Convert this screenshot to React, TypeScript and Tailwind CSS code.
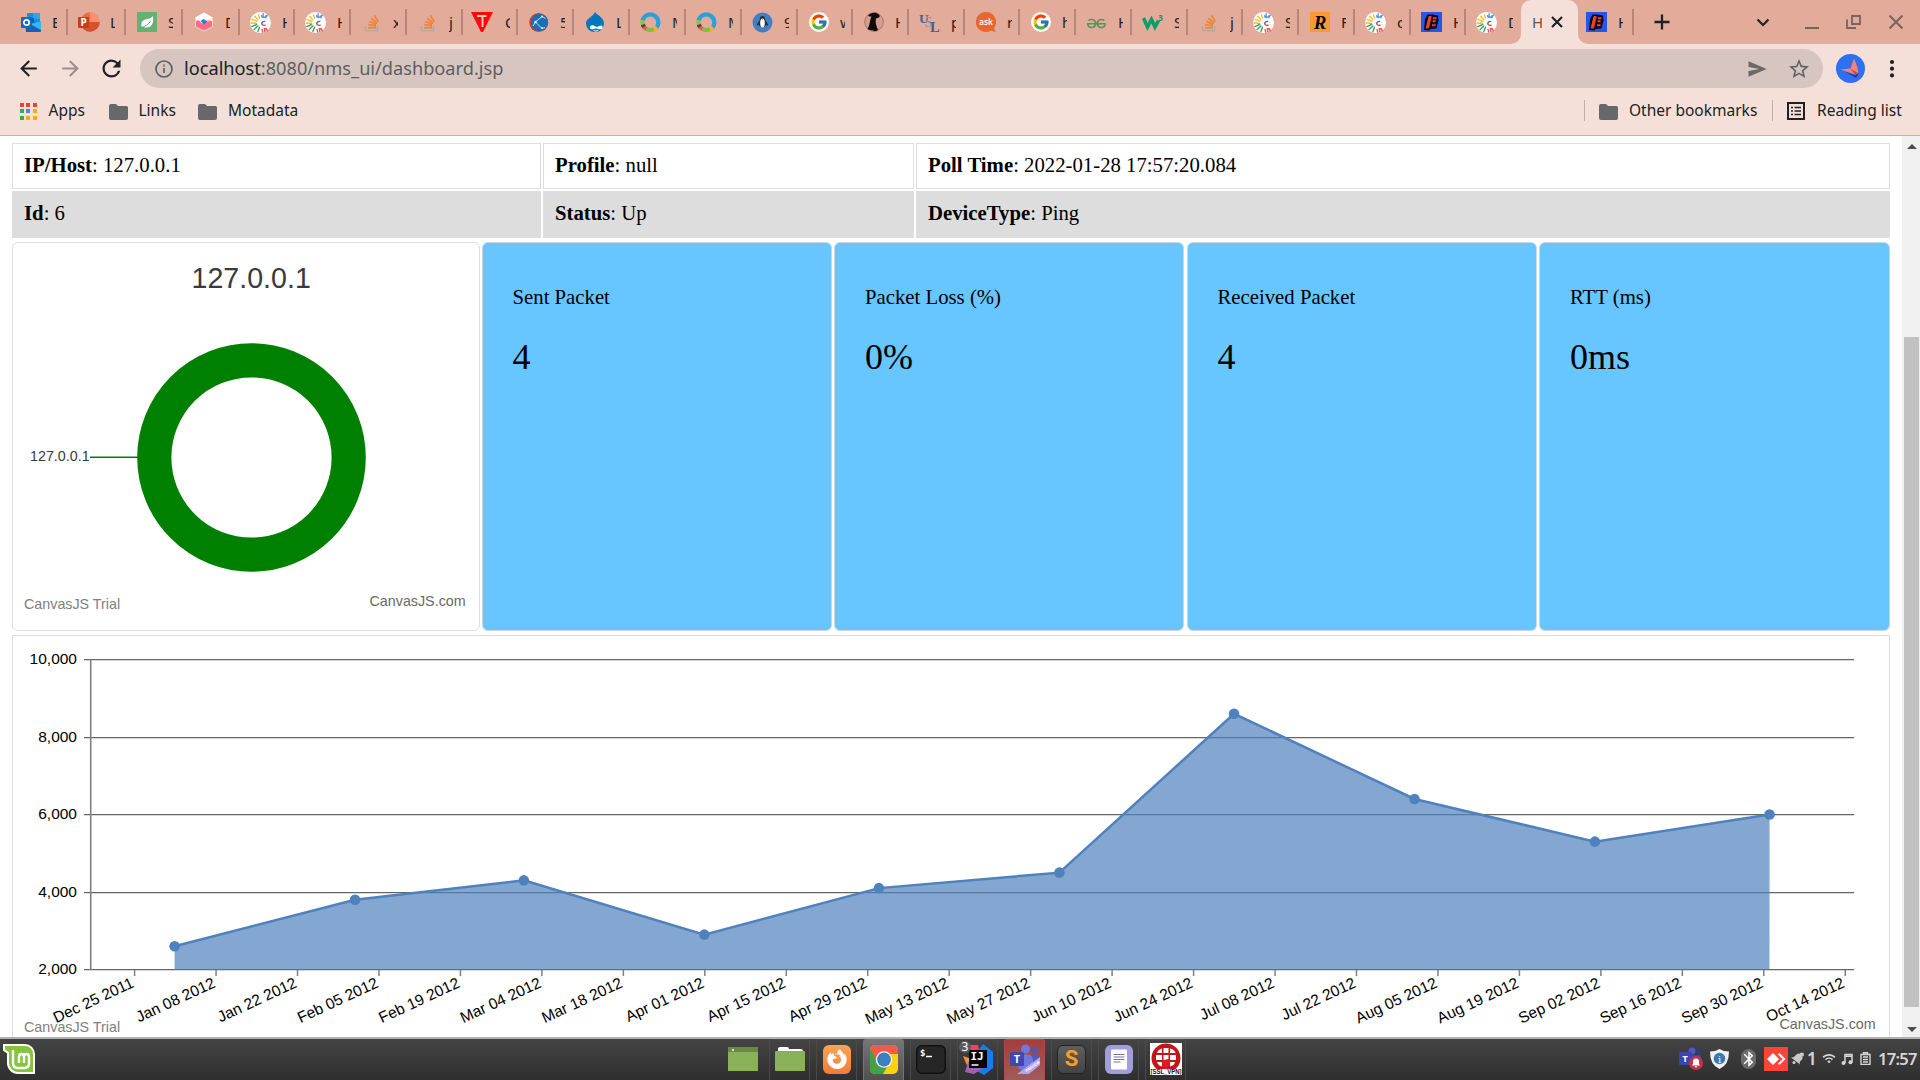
import React from "react";
import { FcGoogle } from "react-icons/fc";
import { SiGeeksforgeeks, SiFirefoxbrowser } from "react-icons/si";
import { MdRefresh, MdArrowBack, MdArrowForward, MdStarOutline, MdWifi, MdBluetooth } from "react-icons/md";

const ICON = "h-5 w-5 shrink-0";

function Outlook() {
  return (
    <svg className={ICON} viewBox="0 0 20 20">
      <rect x="6" y="1" width="13" height="13" rx="1" fill="#1490df" />
      <rect x="12" y="1" width="7" height="6" fill="#28a8ea" />
      <rect x="7" y="6" width="6" height="6" fill="#0364b8" />
      <path d="M4 10h16v9a1 1 0 0 1-1 1H5z" fill="#1a5fb8" />
      <path d="M20 9v9L9 12z" fill="#35b8f1" />
      <rect x="0" y="5" width="11" height="11" rx="1" fill="#0f6cbd" />
      <circle cx="5.5" cy="10.5" r="2.7" fill="none" stroke="#fff" strokeWidth="1.7" />
    </svg>
  );
}
function PowerPoint() {
  return (
    <svg className="h-5 w-[22px] shrink-0" viewBox="0 0 22 20">
      <circle cx="12" cy="10" r="9.7" fill="#ed6c47" />
      <path d="M12 .3a9.7 9.7 0 0 1 9.7 9.7H12z" fill="#ff8f6b" />
      <path d="M2.3 10h19.4a9.7 9.7 0 0 1-19.4 0z" fill="#d35230" />
      <rect x="0" y="5" width="11" height="11" rx="1" fill="#c43e1c" />
      <text x="2.4" y="14" fontSize="10" fontWeight="700" fill="#fff" fontFamily="Open Sans, sans-serif">P</text>
    </svg>
  );
}
function Leaf() {
  return (
    <svg className={ICON} viewBox="0 0 20 20">
      <rect width="20" height="20" fill="#65b073" />
      <path d="M4.500 14.500C3.500 9 7 7.500 10.500 7c2.500-.4 4-1.200 5.300-3 1 5.500 0 11.500-6.300 11.500-1.300 0-2.200-.2-3-.6z" fill="#fff" />
      <path d="M5 15.300c3.500-.8 6.500-2.800 8.500-6" fill="none" stroke="#65b073" strokeWidth="1" />
    </svg>
  );
}
function Hexagon() {
  return (
    <svg className={ICON} viewBox="0 0 20 20">
      <path d="M10 .5l8.500 4.800v9.400L10 19.500l-8.500-4.800V5.300z" fill="#fff" />
      <path d="M2 9c2-1.500 3-1 4.500 1s2 1.500 3.500 0 4-2.500 8-1v5.500L10 18.700 2 14.500z" fill="#ff6b84" />
      <path d="M6.500 9l3-2 4 2.500-3.500 3z" fill="#1c86d8" />
      <path d="M12.500 8.500l2.500-1 1.500 1.500-3 1z" fill="#ffc352" />
    </svg>
  );
}
function Rays() {
  return (
    <svg className="h-[21px] w-[21px] shrink-0" viewBox="0 0 20 20">
      <circle cx="10" cy="10" r="10" fill="#fff" />
      <g fill="none" strokeWidth="1.300" strokeLinecap="round">
        <path d="M2 7l4.500 2M4.500 4l3 3.500M1 10.500l5 .2M8 2.800l1.200 3" stroke="#f4b92a" />
        <path d="M1.800 14l4.700-2.300M4 16.800l3.500-3.500M7.500 18.500l1.600-4" stroke="#3b9e58" />
        <path d="M12 19l-.5-2.500M16.500 18l-1-2h-2M14 18.500v-1.500" stroke="#e0524c" />
        <path d="M11 3.500c0 2 3 2.500 4.500 0M12.500 1.500v3M16.500 3l-1.500 2.500" stroke="#5b93e6" />
        <path d="M14 9a2.300 2.300 0 0 0-2.800 2" stroke="#2f6fe0" />
        <path d="M11.200 11a2.300 2.300 0 0 0 3.300 1.500" stroke="#e7463c" />
      </g>
    </svg>
  );
}
function Stack() {
  return (
    <svg className={ICON} viewBox="0 0 20 20">
      <path d="M3.500 14v4.700h12V14" fill="none" stroke="#b5a9a5" strokeWidth="1.500" />
      <path d="M6 15.800h8M6.200 12.600l7.800 1.200M7.300 9.300l7 3M9.300 6.200l5.800 4.900M12.300 3.300l4 6.400" stroke="#ef8536" strokeWidth="1.800" />
    </svg>
  );
}
function RedTriangle() {
  return (
    <svg className="-ml-1 h-5 w-[22px] shrink-0" viewBox="0 0 22 20">
      <path d="M0 0h22L12 20h-2z" fill="#fb0a0a" />
      <path d="M6 4h9.500M11.500 4v11" stroke="#f7cfc6" strokeWidth="1.900" />
    </svg>
  );
}
function Network() {
  return (
    <svg className={ICON} viewBox="0 0 20 20">
      <circle cx="9.700" cy="10.500" r="9.400" fill="#d23a33" />
      <circle cx="10.500" cy="10.300" r="8.600" fill="#1770b3" />
      <path d="M13 4.500L6.500 10 13 16.500M13 4.500l3.500 2M6.500 10L4 14M13 16.500l3-1" stroke="#dbe9f5" strokeWidth=".9" fill="none" />
      <circle cx="6.500" cy="10" r="1.300" fill="#dbe9f5" />
      <circle cx="13" cy="4.500" r="1" fill="#dbe9f5" />
      <circle cx="13" cy="16" r="1" fill="#dbe9f5" />
    </svg>
  );
}
function Drop() {
  return (
    <svg className={ICON} viewBox="0 0 20 20">
      <path d="M10 0c1 2.500 9 5 9 11.500A8.700 8.700 0 0 1 10 20a8.700 8.700 0 0 1-9-8.500C1 6 8.500 4.500 10 0z" fill="#0277bd" />
      <path d="M5 15.500c0-3.500 4-2.500 5.500-1s6-3 7 0-3 3.500-5 2.200-7.500 2.500-7.500-1.200z" fill="#fff" />
      <path d="M8.500 18.300c1.500 1 3.500.8 4.500 0" stroke="#fff" fill="none" />
    </svg>
  );
}
function Ring() {
  return (
    <svg className="h-5 w-[21px] shrink-0" viewBox="0 0 21 20">
      <g fill="none" strokeWidth="4.200">
        <path d="M2.600 8.500A8 8 0 1 1 16.500 15.600" stroke="#2e9fdb" />
        <path d="M2.600 8.300A8 8 0 0 0 2.800 12.500" stroke="#8bc34a" />
        <path d="M2.800 12.500A8 8 0 0 0 4.200 15" stroke="#444" />
        <path d="M4.200 15A8 8 0 0 0 6.500 17" stroke="#ef5350" />
        <path d="M6.500 17A8 8 0 0 0 14 17.200" stroke="#7cc142" />
        <path d="M14 17.200A8 8 0 0 0 16.700 15.300" stroke="#fbb01c" />
      </g>
    </svg>
  );
}
function Penguin() {
  return (
    <svg className="h-[21px] w-[21px] shrink-0" viewBox="0 0 21 20">
      <circle cx="10.500" cy="10" r="10" fill="#427fc6" />
      <path d="M10.500 3.500c2 0 2.700 1.500 2.700 3.500 0 1 4 5 2.600 6-.6.400-1.200-.8-1.800-.4-.5 3-6.500 3-7 0-.6-.4-1.200.8-1.800.4C3.800 12 7.800 8 7.800 7c0-2 .7-3.500 2.700-3.500z" fill="#263238" />
      <ellipse cx="10.500" cy="10.500" rx="2.300" ry="4.500" fill="#fff" />
      <path d="M9.500 6.500h2l-1 1.500z" fill="#f0b429" />
    </svg>
  );
}
function Google() {
  return (
    <span className="flex h-5 w-5 shrink-0 items-center justify-center rounded-full bg-white">
      <FcGoogle className="h-[18px] w-[18px]" />
    </span>
  );
}
function Portrait() {
  return (
    <svg className={ICON} viewBox="0 0 20 20">
      <circle cx="10" cy="10" r="9.300" fill="#d59f8e" stroke="#a87365" />
      <path d="M4 3.500C7 0 12 0 14 2c2 1 2 2.500 1 3.500l-3 1c-1 4 0 7 2 11.500-3 2-5 1-5.500 0-1.500.5-4.500 0-5-1.500 2.500-3 2-8 4-12C6 4.500 5 4.500 4 3.500z" fill="#110b0b" />
    </svg>
  );
}
function Usl() {
  return (
    <svg className="h-5 w-[21px] shrink-0" viewBox="0 0 21 20" fontFamily="Liberation Serif, serif" fontWeight="700">
      <text x="0" y="10.500" fontSize="13.500" fill="#44608f">U</text>
      <text x="5.500" y="14.500" fontSize="14" fontWeight="400" fill="#7c8fb5">S</text>
      <text x="11" y="19.500" fontSize="14.500" fill="#44608f">L</text>
    </svg>
  );
}
function Ask() {
  return (
    <svg className={ICON} viewBox="0 0 20 20">
      <path d="M10 0a10 10 0 0 1 8 16l1.500 4-4.500-1.500A10 10 0 1 1 10 0z" fill="#e9662c" />
      <text x="10" y="13.300" fontSize="8.600" fontWeight="600" textAnchor="middle" fill="#fff" fontFamily="Open Sans, sans-serif">ask</text>
    </svg>
  );
}
function Gfg() {
  return <SiGeeksforgeeks className="mt-[2px] h-[19px] w-[19px] shrink-0 text-[#4f9a58]" />;
}
function W3() {
  return (
    <svg className="h-5 w-[21px] shrink-0" viewBox="0 0 21 20">
      <path d="M1.500 6l4 9 4-7.500 3.500 7.500 3.500-6.500" fill="none" stroke="#0a9e6c" strokeWidth="3.600" />
      <text x="16" y="9" fontSize="8.500" fontWeight="700" fill="#0a9e6c" fontFamily="Open Sans, sans-serif">3</text>
    </svg>
  );
}
function Rbox() {
  return (
    <svg className={ICON} viewBox="0 0 20 20">
      <rect width="20" height="20" fill="#fb9a34" />
      <text x="3.800" y="16.500" fontSize="19" fontWeight="700" fontStyle="italic" fill="#000" fontFamily="Liberation Serif, serif">R</text>
    </svg>
  );
}
function Blue() {
  return (
    <svg className="h-5 w-[21px] shrink-0" viewBox="0 0 21 20">
      <rect width="21" height="20" fill="#2458ea" />
      <path d="M6.500 2.500h5l5.500 1 .5 5-2 8-6 .5-1 1.500-5.500-.5 1-11z" fill="#0a0c1e" />
      <path d="M8 4.500h2.200L7.500 16H5.200z" fill="#f4402b" stroke="#f4402b" />
      <path d="M12 6.200h3.500M11.600 9.300h3M11 13.300h3.500" stroke="#f4402b" strokeWidth="2" />
    </svg>
  );
}

type Tab = [number, React.FC, string];
const TABS: Tab[] = [
  [58, Outlook, "E"], [58, PowerPoint, "L"], [57, Leaf, "S"], [57, Hexagon, "D"], [55, Rays, "H"], [56, Rays, "H"],
  [56, Stack, "x"], [56, Stack, "j"], [55, RedTriangle, "C"], [56, Network, "5"], [56, Drop, "L"], [56, Ring, "M"],
  [56, Ring, "M"], [56, Penguin, "9"], [55, Google, "w"], [56, Portrait, "H"], [56, Usl, "p"], [55, Ask, "r"],
  [56, Google, "h"], [56, Gfg, "H"], [56, W3, "S"], [55, Stack, "j"], [56, Rays, "S"], [56, Rbox, "F"],
  [56, Rays, "c"], [55, Blue, "H"], [55, Rays, "D"],
];

function TabItem({ tab, last }: { tab: Tab; last?: boolean }) {
  const [width, Icon, letter] = tab;
  return (
    <div className="relative flex h-full shrink-0 items-center pl-[10px]" style={{ width }}>
      <div className="flex w-[21px] justify-center"><Icon /></div>
      <span className="ml-[11px] w-[5px] overflow-hidden text-[15px] leading-5">{letter}</span>
      {!last && <span className="absolute right-0 top-[9px] h-[26px] w-[2px] bg-[#b5877b]" />}
    </div>
  );
}

function TabStrip() {
  return (
    <div className="flex h-11 shrink-0 bg-[#e3ab99] pl-[10px] text-[#202124]">
      {TABS.map((t, i) => <TabItem key={i} tab={t} last={i === TABS.length - 1} />)}
      <div className="relative flex h-full w-[57px] shrink-0 items-center rounded-t-[10px] bg-[#f5e0d9] pl-[11px]">
        <svg className="absolute -left-[10px] bottom-0 h-[10px] w-[10px]" viewBox="0 0 10 10"><path d="M10 0v10H0A10 10 0 0 0 10 0z" fill="#f5e0d9" /></svg>
        <svg className="absolute -right-[10px] bottom-0 h-[10px] w-[10px]" viewBox="0 0 10 10"><path d="M0 0v10h10A10 10 0 0 1 0 0z" fill="#f5e0d9" /></svg>
        <span className="w-[10px] overflow-hidden text-[15px] leading-5 text-[#5f5450]">H</span>
        <svg className="ml-[9px] h-3 w-3" viewBox="0 0 12 12"><path d="M1 1l10 10M11 1L1 11" stroke="#202124" strokeWidth="2.200" /></svg>
      </div>
      <div className="-ml-[2px] h-full shrink-0"><TabItem tab={[58, Blue, "H"]} /></div>
      <div className="flex flex-1 items-center">
        <svg className="ml-5 h-4 w-4" viewBox="0 0 16 16"><path d="M8 .5v15M.5 8h15" stroke="#202124" strokeWidth="2.300" /></svg>
        <svg className="ml-[87px] h-3 w-3" viewBox="0 0 12 12"><path d="M.5 3.500L6 9l5.500-5.500" fill="none" stroke="#202124" strokeWidth="2.200" /></svg>
        <span className="ml-9 mt-[11px] h-[2px] w-[14px] bg-[#76655f]" />
        <svg className="ml-[27px] h-[14px] w-[15px]" viewBox="0 0 15 14"><path d="M6 1h8v8H6zM1 4.500V13h9" fill="none" stroke="#76655f" strokeWidth="1.800" /></svg>
        <svg className="ml-7 h-[14px] w-[14px]" viewBox="0 0 14 14"><path d="M.5.5l13 13M13.500.5l-13 13" stroke="#76655f" strokeWidth="2" /></svg>
      </div>
    </div>
  );
}

function Toolbar() {
  return (
    <div className="flex h-[49px] shrink-0 items-center bg-[#f5e0d9] text-[#202124]">
      <MdArrowBack className="ml-4 h-[25px] w-[25px]" />
      <MdArrowForward className="ml-[17px] h-[25px] w-[25px] text-[#9c8f8b]" />
      <MdRefresh className="ml-[15px] h-[27px] w-[27px]" />
      <div className="ml-[15px] flex h-[39px] w-[1683px] items-center rounded-full bg-[#d7c6bf] pl-[15px]">
        <svg className="h-[18px] w-[18px]" viewBox="0 0 18 18" fill="none" stroke="#5f6368" strokeWidth="1.700"><circle cx="9" cy="9" r="8" /><path d="M9 8v5M9 4.600v1.900" /></svg>
        <span className="mb-[2px] ml-[11px] text-[18.200px] leading-6 text-[#5f5d60]"><span className="text-[#202124]">localhost</span>:8080/nms_ui/dashboard.jsp</span>
        <svg className="ml-auto h-4 w-[19px]" viewBox="0 0 19 16"><path d="M.5.300L18.700 8 .5 15.700V10l11-2-11-2z" fill="#6b6867" /></svg>
        <MdStarOutline className="ml-5 mr-3 h-6 w-6 text-[#5f6368]" />
      </div>
      <svg className="ml-[13px] h-[29px] w-[29px]" viewBox="0 0 29 29">
        <circle cx="14.500" cy="14.500" r="14.500" fill="#2f70f0" />
        <path d="M8 17l10 4 5-2-3 5-5-3z" fill="#1d3f9e" />
        <path d="M4.500 15.500l10-1L18 4.500l3.500 9 .8 5.500-3 1.500-6-2z" fill="#f58278" />
        <path d="M14.500 14.500l7.500 4.500-3 1.500z" fill="#c9474b" />
      </svg>
      <svg className="ml-[23px] h-5 w-[8px]" viewBox="0 0 8 20" fill="#202124"><circle cx="4" cy="3" r="2.100" /><circle cx="4" cy="9.700" r="2.100" /><circle cx="4" cy="16.400" r="2.100" /></svg>
    </div>
  );
}

function Folder({ className }: { className: string }) {
  return (
    <svg className={className} viewBox="0 0 19 16"><path d="M2 0h5l2 2h8.500A1.500 1.500 0 0 1 19 3.500V14a2 2 0 0 1-2 2H2a2 2 0 0 1-2-2V2a2 2 0 0 1 2-2z" fill="#666869" /></svg>
  );
}

const APPS = ["#ea4335", "#ea4335", "#ea4335", "#34a853", "#4285f4", "#fbab0c", "#34a853", "#fbab0c", "#fbab0c"];

function Bookmarks() {
  return (
    <div className="flex h-[43px] shrink-0 items-center border-b border-[#c3b1ab] bg-[#f5e0d9] pb-[7px] text-[15.500px] text-[#202124]">
      <div className="mb-[-1px] ml-[19.500px] grid grid-cols-3 gap-[2.500px]">
        {APPS.map((c, i) => <span key={i} className="h-1 w-1" style={{ backgroundColor: c }} />)}
      </div>
      <span className="ml-3 w-[60px]">Apps</span>
      <Folder className="mt-[2px] h-4 w-[19px]" />
      <span className="ml-[11px] w-[59px]">Links</span>
      <Folder className="mt-[2px] h-4 w-[19px]" />
      <span className="ml-[11.500px]">Motadata</span>
      <span className="ml-auto h-[21px] w-px bg-[#c0aea8]" />
      <Folder className="ml-[14px] mt-[2px] h-4 w-[19px]" />
      <span className="ml-[11px] w-[129px] whitespace-nowrap">Other bookmarks</span>
      <span className="ml-[14px] h-[21px] w-px bg-[#c0aea8]" />
      <svg className="ml-[14px] h-[18px] w-[18px]" viewBox="0 0 18 18"><path d="M1 1h16v16H1z" fill="none" stroke="#202124" strokeWidth="2" /><path d="M4 5.500h2M4 9h2M4 12.500h2M7.500 5.500H14M7.500 9H14M7.500 12.500H14" stroke="#202124" strokeWidth="1.700" /></svg>
      <span className="ml-3 mr-[17px] w-[86px] whitespace-nowrap">Reading list</span>
    </div>
  );
}

const INFO = [
  [["IP/Host", "127.0.0.1"], ["Profile", "null"], ["Poll Time", "2022-01-28 17:57:20.084"]],
  [["Id", "6"], ["Status", "Up"], ["DeviceType", "Ping"]],
];
const STATS = [["Sent Packet", "4"], ["Packet Loss (%)", "0%"], ["Received Packet", "4"], ["RTT (ms)", "0ms"]];

function Donut() {
  return (
    <svg className="block h-[387px] w-[466px]" viewBox="13 243 466 387" fontFamily="Liberation Sans, sans-serif">
      <text x="251.200" y="288" fontSize="28.600" textAnchor="middle" fill="#3a3a3a">127.0.0.1</text>
      <circle cx="251.500" cy="457.500" r="97.200" fill="none" stroke="#008000" strokeWidth="34.200" />
      <path d="M90 457.300h48" stroke="#008000" strokeWidth="1.500" />
      <text x="30" y="461" fontSize="14.300" fill="#3a3a3a">127.0.0.1</text>
      <text x="24" y="609" fontSize="14.300" fill="#808080">CanvasJS Trial</text>
      <text x="369.500" y="606" fontSize="14.300" fill="#696969">CanvasJS.com</text>
    </svg>
  );
}

const DATES = ["Dec 25 2011", "Jan 08 2012", "Jan 22 2012", "Feb 05 2012", "Feb 19 2012", "Mar 04 2012", "Mar 18 2012", "Apr 01 2012", "Apr 15 2012", "Apr 29 2012", "May 13 2012", "May 27 2012", "Jun 10 2012", "Jun 24 2012", "Jul 08 2012", "Jul 22 2012", "Aug 05 2012", "Aug 19 2012", "Sep 02 2012", "Sep 16 2012", "Sep 30 2012", "Oct 14 2012"];
const SERIES = [[0, 2600], [31, 3800], [60, 4300], [91, 2900], [121, 4100], [152, 4500], [182, 8600], [213, 6400], [244, 5300], [274, 6000]];
const yOf = (v: number) => 969.5 - ((v - 2000) / 1000) * 38.75;
const POINTS = SERIES.map(([d, v]) => [174.6 + d * 5.821, yOf(v)]);
const LINE = POINTS.map((p) => p.join(",")).join(" ");

function AreaChart() {
  return (
    <svg className="block h-[402px] w-[1876px]" viewBox="13 636 1876 402" fontFamily="Liberation Sans, sans-serif" fontSize="15.500">
      {[10000, 8000, 6000, 4000, 2000].map((v) => (
        <g key={v}>
          <path d={`M84 ${Math.floor(yOf(v)) + 0.6}H1854`} stroke="#666" strokeWidth="1.250" />
          <text x="77" y={yOf(v) + 4.5} textAnchor="end" fill="#000">{v.toLocaleString("en-US")}</text>
        </g>
      ))}
      <path d="M90.700 659V970" stroke="#808080" strokeWidth="1.600" />
      <polygon points={`174.600,969.500 ${LINE} 1769.500,969.500`} fill="#4f81bd" fillOpacity="0.700" />
      <polyline points={LINE} fill="none" stroke="#4f81bd" strokeWidth="2.500" />
      {POINTS.map(([x, y]) => <circle key={x} cx={x} cy={y} r="5.300" fill="#4f81bd" />)}
      {DATES.map((d, i) => {
        const x = 134.6 + i * 81.46;
        return (
          <g key={d}>
            <path d={`M${x} 970v6`} stroke="#808080" strokeWidth="1.500" />
            <text transform={`translate(${x + 0.3} 986.500) rotate(-25)`} textAnchor="end" fill="#000">{d}</text>
          </g>
        );
      })}
      <text x="24" y="1032" fontSize="14.300" fill="#808080">CanvasJS Trial</text>
      <text x="1779.500" y="1029" fontSize="14.300" fill="#696969">CanvasJS.com</text>
    </svg>
  );
}

function Page() {
  return (
    <div className="flex min-h-0 flex-1 overflow-hidden bg-white font-['Liberation_Serif',serif] text-[20.750px] text-black">
      <div className="flex w-[1902px] flex-col px-3 pt-[7px]">
        {INFO.map((row, r) => (
          <div key={r} className={r === 0 ? "mb-[2px] grid h-[46px] shrink-0 grid-cols-[529px_371px_974px] gap-[2px]" : "mb-1 grid h-[47px] shrink-0 grid-cols-[529px_371px_974px] gap-[2px]"}>
            {row.map(([k, v]) => (
              <div key={k} className={r === 0 ? "border border-[#ddd] px-[11px] pt-[6px] leading-[30px]" : "border border-[#ddd] bg-[#ddd] px-[11px] pt-[6px] leading-[30px]"}>
                <b>{k}</b>: {v}
              </div>
            ))}
          </div>
        ))}
        <div className="mb-1 grid h-[389px] shrink-0 grid-cols-[468px_350px_350px_350px_350px] gap-x-[2.500px]">
          <div className="overflow-hidden rounded-[6px] border border-[#ddd]"><Donut /></div>
          {STATS.map(([k, v]) => (
            <div key={k} className="-ml-px mr-px rounded-[6px] border border-[#ccd8df] bg-[#67c5ff] pl-[30px] pt-[39px] last:mr-0">
              <div className="leading-[30px]">{k}</div>
              <div className="mt-[25px] text-[36px] leading-[40px]">{v}</div>
            </div>
          ))}
        </div>
        <div className="shrink-0 border border-b-0 border-[#ddd]"><AreaChart /></div>
      </div>
      <div className="flex w-[18px] flex-col items-center bg-[#f0f0f0] pl-px">
        <svg className="mt-2 h-[5px] w-[10px] shrink-0" viewBox="0 0 10 5"><path d="M0 5l5-5 5 5z" fill="#4d4d4d" /></svg>
        <div className="mt-[188px] h-[670px] w-[15px] shrink-0 bg-[#c1c1c1]" />
        <svg className="mt-5 h-[5px] w-[10px] shrink-0" viewBox="0 0 10 5"><path d="M0 0l5 5 5-5z" fill="#4d4d4d" /></svg>
      </div>
    </div>
  );
}

function Tile({ children, className = "border-[#4a4a4a]" }: { children: React.ReactNode; className?: string }) {
  return <div className={`flex h-[41px] w-[41px] shrink-0 items-center justify-center rounded-t-[3px] border border-b-0 pb-[2px] ${className}`}>{children}</div>;
}

function Dock() {
  return (
    <div className="flex gap-[6px]">
      <div className="flex h-[41px] w-[41px] items-center justify-center pb-[2px]">
        <svg className="h-6 w-[30px]" viewBox="0 0 30 24"><rect width="30" height="24" fill="#8bb158" /><rect width="30" height="5" fill="#688a43" /><circle cx="5" cy="3" r="1" fill="#fff" /></svg>
      </div>
      <Tile><svg className="h-6 w-[30px]" viewBox="0 0 30 24"><path d="M3 4V1.500Q3 0 5 0h7q2 0 2 2h12q2 0 2 2z" fill="#fff" /><rect y="4" width="30" height="20" rx="1" fill="#8bb158" /></svg></Tile>
      <Tile>
        <span className="flex h-[29px] w-[28px] items-center justify-center rounded-[6px] bg-linear-to-b from-[#fba453] to-[#f27b38]">
          <SiFirefoxbrowser className="h-5 w-5 text-white" />
        </span>
      </Tile>
      <Tile className="border-[#747474] bg-linear-to-b from-[#777] to-[#505050]">
        <svg className="h-[29px] w-[28px]" viewBox="0 0 28 29">
          <defs><clipPath id="chrome"><rect width="28" height="29" rx="5" /></clipPath></defs>
          <g clipPath="url(#chrome)">
            <rect width="28" height="29" fill="#fbd20c" />
            <path d="M0 0h28v9H14L8 17 0 5z" fill="#ee5a4c" />
            <path d="M0 4l8 13 6 4 4-1-5 9H0z" fill="#44a047" />
          </g>
          <circle cx="14" cy="14.500" r="8.300" fill="#f4f4f4" /><circle cx="14" cy="14.500" r="6.900" fill="#3f7fc0" />
        </svg>
      </Tile>
      <Tile><svg className="h-[29px] w-[30px]" viewBox="0 0 30 29"><rect x=".8" y=".8" width="28.400" height="27.400" rx="5" fill="#262626" stroke="#111" strokeWidth="1.500" /><text x="4" y="11" fontSize="9" fontWeight="700" fill="#fff" fontFamily="DejaVu Sans Mono, monospace">$</text><path d="M10 11.500h6" stroke="#fff" strokeWidth="1.500" /></svg></Tile>
      <div className="relative">
        <Tile>
          <svg className="h-[31px] w-[30px]" viewBox="0 0 30 31">
            <path d="M7 1l8 0 2 10L5 20l2-6z" fill="#fb3a6e" /><path d="M0 12l6 2 2 12-3-2z" fill="#f9902e" />
            <path d="M14 8L20 0l10 8v16l-9 7-11-6z" fill="#147df0" /><path d="M5 18L2 28l9 2 12-8z" fill="#a65fb4" />
            <rect x="6" y="6" width="18" height="18" fill="#000" />
            <path d="M8.500 21h7" stroke="#fff" strokeWidth="1.500" />
            <text x="7.500" y="16" fontSize="11" fontWeight="700" fill="#fff" fontFamily="DejaVu Sans Mono, monospace">IJ</text>
          </svg>
        </Tile>
        <span className="absolute left-[2px] top-[2px] h-3 w-3 rounded-full bg-[#5a5a5a] text-center text-[12px] leading-3 text-white">3</span>
      </div>
      <Tile className="border-[#b04b4b] bg-linear-to-b from-[#a63c3c] to-[#a05b5b]">
        <svg className="h-[31px] w-[32px]" viewBox="0 0 32 31">
          <circle cx="26" cy="7" r="3.300" fill="#4f58c0" /><rect x="20" y="11" width="10" height="12" rx="3" fill="#4f58c0" />
          <circle cx="16.500" cy="5" r="4.500" fill="#6f78e0" /><rect x="9" y="10.500" width="15" height="16" rx="5" fill="#6f78e0" />
          <rect x="1" y="8" width="14" height="14" rx="1.500" fill="#4048b0" />
          <text x="8" y="19" fontSize="11" fontWeight="700" textAnchor="middle" fill="#fff" fontFamily="Open Sans, sans-serif">T</text>
          <path d="M8 30L31 13v8L20 30z" fill="#b3a5ee" />
          <text transform="translate(17.500 28.500) rotate(-36)" fontSize="3.800" fontWeight="700" fill="#fff" fontFamily="Open Sans, sans-serif">PREVIEW</text>
        </svg>
      </Tile>
      <Tile>
        <span className="flex h-[29px] w-[29px] items-center justify-center rounded-[6px] border border-[#222] bg-linear-to-b from-[#5f5f5f] to-[#444] font-['Roboto',sans-serif] text-[22px] font-bold leading-none text-[#fba01e]">S</span>
      </Tile>
      <Tile>
        <svg className="h-[29px] w-[28px]" viewBox="0 0 28 29"><rect width="28" height="29" rx="6" fill="#a19edb" /><rect x="6" y="4.500" width="16" height="20" rx="1" fill="#fff" /><path d="M8.500 9.500h11M8.500 12h11M8.500 14.500h11M8.500 17h7" stroke="#7470a8" /></svg>
      </Tile>
      <Tile>
        <svg className="h-8 w-8 shrink-0" viewBox="0 0 32 32">
          <rect width="32" height="32" fill="#fff" />
          <circle cx="16" cy="15" r="14.500" fill="#c3151a" />
          <g fill="#fff">
            <path d="M8 8q2-2 4-2.400V10H7zM13.500 5h5v5h-5zM20 5.600Q22.500 6 24.500 8l1 2H20zM6 12h6v5H6zM13.500 12h5v5h-5zM20 12h6v5h-6zM7 19h5v4.500q-2.500-.5-4-2.500zM20 19h5l-1 2.500q-2 1.500-4 2z" />
          </g>
          <path d="M12 17.500l8-2-1 7-3 4-3-3z" fill="#e01b20" />
          <rect y="26" width="32" height="6" fill="#fff" />
          <text x="16" y="31" fontSize="7" fontWeight="700" textAnchor="middle" textLength="31" lengthAdjust="spacingAndGlyphs" fill="#111" fontFamily="Liberation Sans, sans-serif">[SSL_VPN]</text>
        </svg>
      </Tile>
    </div>
  );
}

function Tray() {
  return (
    <div className="ml-auto flex h-[41px] items-center pb-[2px] pr-[3px] text-[#d6d6d6]">
      <svg className="h-[23px] w-6" viewBox="0 0 24 23">
        <circle cx="13" cy="4" r="3.500" fill="#5058c4" /><circle cx="20" cy="5" r="2.600" fill="#2f389a" /><rect x="0" y="5" width="13" height="13" rx="1" fill="#3c45ae" /><rect x="12" y="8" width="10" height="10" fill="#3c45ae" />
        <text x="6" y="15" fontSize="9" fontWeight="700" textAnchor="middle" fill="#fff" fontFamily="Open Sans, sans-serif">T</text>
        <circle cx="17" cy="16" r="7" fill="#c4314b" /><path d="M13 18.500l1-1.500v-2.500a3 3 0 0 1 6 0V17l1 1.500zM15.500 19.300h3l-1.500 1.500z" fill="#fff" />
      </svg>
      <svg className="ml-[7px] h-5 w-[19px]" viewBox="0 0 19 20"><path d="M9.500 0q4 2.500 9.500 2.500Q19 16 9.500 20 0 16 0 2.500 5.500 2.500 9.500 0z" fill="#f1f1f1" /><circle cx="9.500" cy="9.500" r="5.800" fill="#3a78b5" /><text x="9.500" y="13.500" fontSize="10" textAnchor="middle" fill="#fff" fontFamily="DejaVu Serif, serif">i</text></svg>
      <span className="ml-3 flex h-5 w-[15px] items-center justify-center rounded-full bg-[#6c6c6c]"><MdBluetooth className="h-[18px] w-[18px] shrink-0 text-white" /></span>
      <svg className="ml-2 h-6 w-6" viewBox="0 0 24 24"><rect width="24" height="24" fill="#fe4438" /><path d="M9 6l6 6-6 6-6-6zM14 7.500L15.500 6l6 6-6 6-1.500-1.500 4.500-4.500z" fill="#fff" /></svg>
      <svg className="ml-[3px] h-[13px] w-[13px]" viewBox="0 0 13 13" fill="#c9c9c9"><path d="M0 5.500q3 .5 4.500-2T8.500 1.500L11.500 5q.5 2.500-1.500 3.500t-1 4z" /><circle cx="10.800" cy="2.600" r="2.200" /><circle cx="3" cy="10.500" r="1.600" /></svg>
      <span className="ml-[3px] w-[11px] text-[17px] font-semibold leading-5">1</span>
      <MdWifi className="ml-[4px] h-[15px] w-[14px]" />
      <svg className="ml-[5px] h-3 w-3" viewBox="0 0 12 12"><path d="M4 10V1.500h7V9M4 3.200h7" fill="none" stroke="#d6d6d6" strokeWidth="1.500" /><circle cx="2.500" cy="10" r="2" fill="#d6d6d6" /><circle cx="9.500" cy="9.300" r="2" fill="#d6d6d6" /></svg>
      <svg className="ml-[7px] h-[13px] w-[11px]" viewBox="0 0 11 13" fill="none" stroke="#d6d6d6"><path d="M1 2.500h9v10H1zM3.500 2.500V.7h4v1.800M3 5h5M3 7.500h5M3 10h5" strokeWidth="1.400" /></svg>
      <span className="ml-[7px] w-[39px] whitespace-nowrap text-[16.500px] font-semibold leading-5 tracking-[-0.700px]">17:57</span>
    </div>
  );
}

export default function App() {
  return (
    <div className="flex h-[1080px] w-[1920px] flex-col overflow-hidden font-['Noto_Sans',sans-serif]">
      <TabStrip />
      <Toolbar />
      <Bookmarks />
      <Page />
      <div className="flex h-[43px] shrink-0 border-t-2 border-[#b0b0b0] bg-linear-to-b from-[#444] to-[#2f2f2f]">
        <svg className="ml-[3px] mt-[5px] h-[30px] w-8" viewBox="0 0 32 30">
          <path d="M1 1h21a9 9 0 0 1 9 9v19H15a10 10 0 0 1-10-10V9L1 6z" fill="#86c43c" stroke="#fff" strokeWidth="2" />
          <path d="M10 6v13q0 5 5 5h6q5 0 5-5v-6q0-3-2.500-3T21 13v6M21 13q0-3-2.500-3T16 13v6" fill="none" stroke="#fff" strokeWidth="2.400" />
        </svg>
        <div className="ml-[687px]"><Dock /></div>
        <Tray />
      </div>
    </div>
  );
}
